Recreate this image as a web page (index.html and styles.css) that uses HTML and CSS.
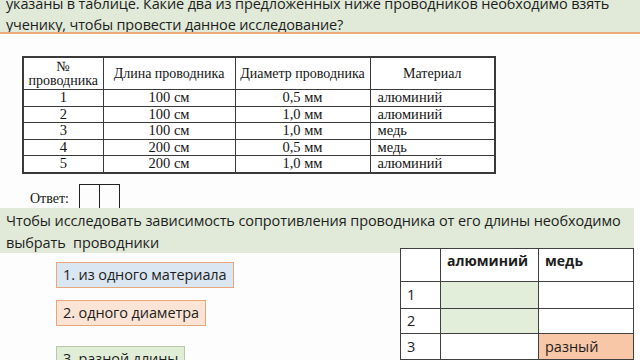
FILE: index.html
```html
<!DOCTYPE html>
<html lang="ru">
<head>
<meta charset="utf-8">
<link rel="stylesheet" href="styles.css">
</head>
<body>
<div class="banner-top">
  <p class="q">указаны в таблице. Какие два из предложенных ниже проводников необходимо взять ученику, чтобы провести данное исследование?</p>
</div>
<div class="data-wrap">
  <table class="data">
    <colgroup><col class="c1"><col class="c2"><col class="c3"><col class="c4"></colgroup>
    <tr class="head"><th>№<br>проводника</th><th>Длина проводника</th><th>Диаметр проводника</th><th>Материал</th></tr>
    <tr><td>1</td><td>100 см</td><td>0,5 мм</td><td class="mat">алюминий</td></tr>
    <tr><td>2</td><td>100 см</td><td>1,0 мм</td><td class="mat">алюминий</td></tr>
    <tr><td>3</td><td>100 см</td><td>1,0 мм</td><td class="mat">медь</td></tr>
    <tr><td>4</td><td>200 см</td><td>0,5 мм</td><td class="mat">медь</td></tr>
    <tr><td>5</td><td>200 см</td><td>1,0 мм</td><td class="mat">алюминий</td></tr>
  </table>
</div>
<div class="answer">
  <span class="answer-label">Ответ:</span>
  <span class="box"></span><span class="box"></span>
</div>
<div class="banner-mid">
  <p>Чтобы исследовать зависимость сопротивления проводника от его длины необходимо<br>выбрать&nbsp; проводники</p>
</div>
<div class="bottom">
  <div class="options">
    <div class="opt opt1">1. из одного материала</div>
    <div class="opt opt2">2. одного диаметра</div>
    <div class="opt opt3">3. разной длины</div>
  </div>
  <table class="grid">
    <colgroup><col class="g1"><col class="g2"><col class="g3"></colgroup>
    <tr class="gh"><th></th><th>алюминий</th><th>медь</th></tr>
    <tr class="r1"><td>1</td><td class="green"></td><td></td></tr>
    <tr class="r2"><td>2</td><td class="green"></td><td></td></tr>
    <tr class="r3"><td>3</td><td></td><td class="salmon">разный</td></tr>
    <tr class="r4"><td>4</td><td></td><td class="salmon"></td></tr>
  </table>
</div>
</body>
</html>
```
FILE: styles.css
```css
html, body {
  margin: 0;
  padding: 0;
  background: #fdfdfd;
  width: 640px;
  height: 360px;
  overflow: hidden;
  font-family: "Open Sans", "Noto Sans", sans-serif;
  color: #1e1e1e;
}

.banner-top {
  height: 32px;
  background: #e1ead8;
  border-bottom: 2px solid #eeac7c;
  overflow: hidden;
  padding: 0 6px;
}

.q {
  margin: -7px 0 0 0;
  font-size: 14.5px;
  line-height: 21px;
  letter-spacing: -0.15px;
}

.data-wrap {
  padding-left: 22px;
  margin-top: 22px;
}

.data {
  border-collapse: collapse;
  border: 2px solid #3a3a3a;
  font-family: "Liberation Serif", "DejaVu Serif", serif;
  font-size: 14.5px;
  color: #151515;
  background: #fff;
}

.data .c1 { width: 80px; }
.data .c2 { width: 132px; }
.data .c3 { width: 135px; }
.data .c4 { width: 125px; }

.data th, .data td {
  border: 1px solid #3a3a3a;
  padding: 0;
  font-weight: normal;
  text-align: center;
  line-height: 15px;
  height: 15.5px;
}

.data .head th {
  height: 31px;
  line-height: 14px;
  font-size: 14px;
}

.data td.mat {
  text-align: left;
  padding-left: 7px;
}

.answer {
  display: flex;
  align-items: flex-end;
  height: 24px;
  margin-top: 10px;
  padding-left: 30px;
  font-family: "Liberation Serif", "DejaVu Serif", serif;
  font-size: 14px;
  color: #151515;
}

.answer-label {
  margin-right: 10px;
  line-height: 18px;
}

.box {
  width: 19px;
  height: 23px;
  border: 1px solid #222;
  border-bottom: none;
}

.box + .box {
  border-left: none;
}

.banner-mid {
  height: 45px;
  width: 634px;
  background: #e1ead8;
  padding: 0 6px;
  box-sizing: border-box;
}

.banner-mid p {
  margin: 0;
  padding-top: 2px;
  font-size: 14.5px;
  line-height: 22px;
  letter-spacing: -0.1px;
}

.bottom {
  display: flex;
  justify-content: space-between;
  align-items: flex-start;
  padding-left: 56px;
  width: 634px;
  box-sizing: border-box;
}

.options {
  display: flex;
  flex-direction: column;
  align-items: flex-start;
  margin-top: 9px;
}

.opt {
  font-size: 14.5px;
  line-height: 24px;
  padding: 0 6px;
  border: 1px solid #e9a679;
  white-space: nowrap;
  box-sizing: border-box;
  letter-spacing: -0.1px;
}

.opt1 {
  background: #dae6f1;
  min-width: 174px;
}

.opt2 {
  background: #fbe4d5;
  margin-top: 12px;
  min-width: 148px;
}

.opt3 {
  background: #e1eed7;
  border-color: #b9c8a8;
  margin-top: 20px;
  min-width: 128px;
}

.grid {
  position: relative;
  margin-top: -5px;
  border-collapse: collapse;
  background: #fff;
  font-size: 14.5px;
  color: #1e1e1e;
}

.grid .g1 { width: 40px; }
.grid .g2 { width: 98px; }
.grid .g3 { width: 95px; }

.grid th, .grid td {
  border: 1px solid #404040;
  padding: 0 6px;
  text-align: left;
}

.grid th {
  height: 33px;
  font-weight: 700;
  font-size: 14px;
  vertical-align: top;
  padding-top: 2px;
  box-sizing: border-box;
}

.grid .r1 td { height: 26px; }
.grid .r2 td { height: 24px; }
.grid .r3 td { height: 25px; }
.grid .r4 td { height: 25px; }

.green { background: #e2eed9; }
.salmon { background: #f8c7a7; }
```
